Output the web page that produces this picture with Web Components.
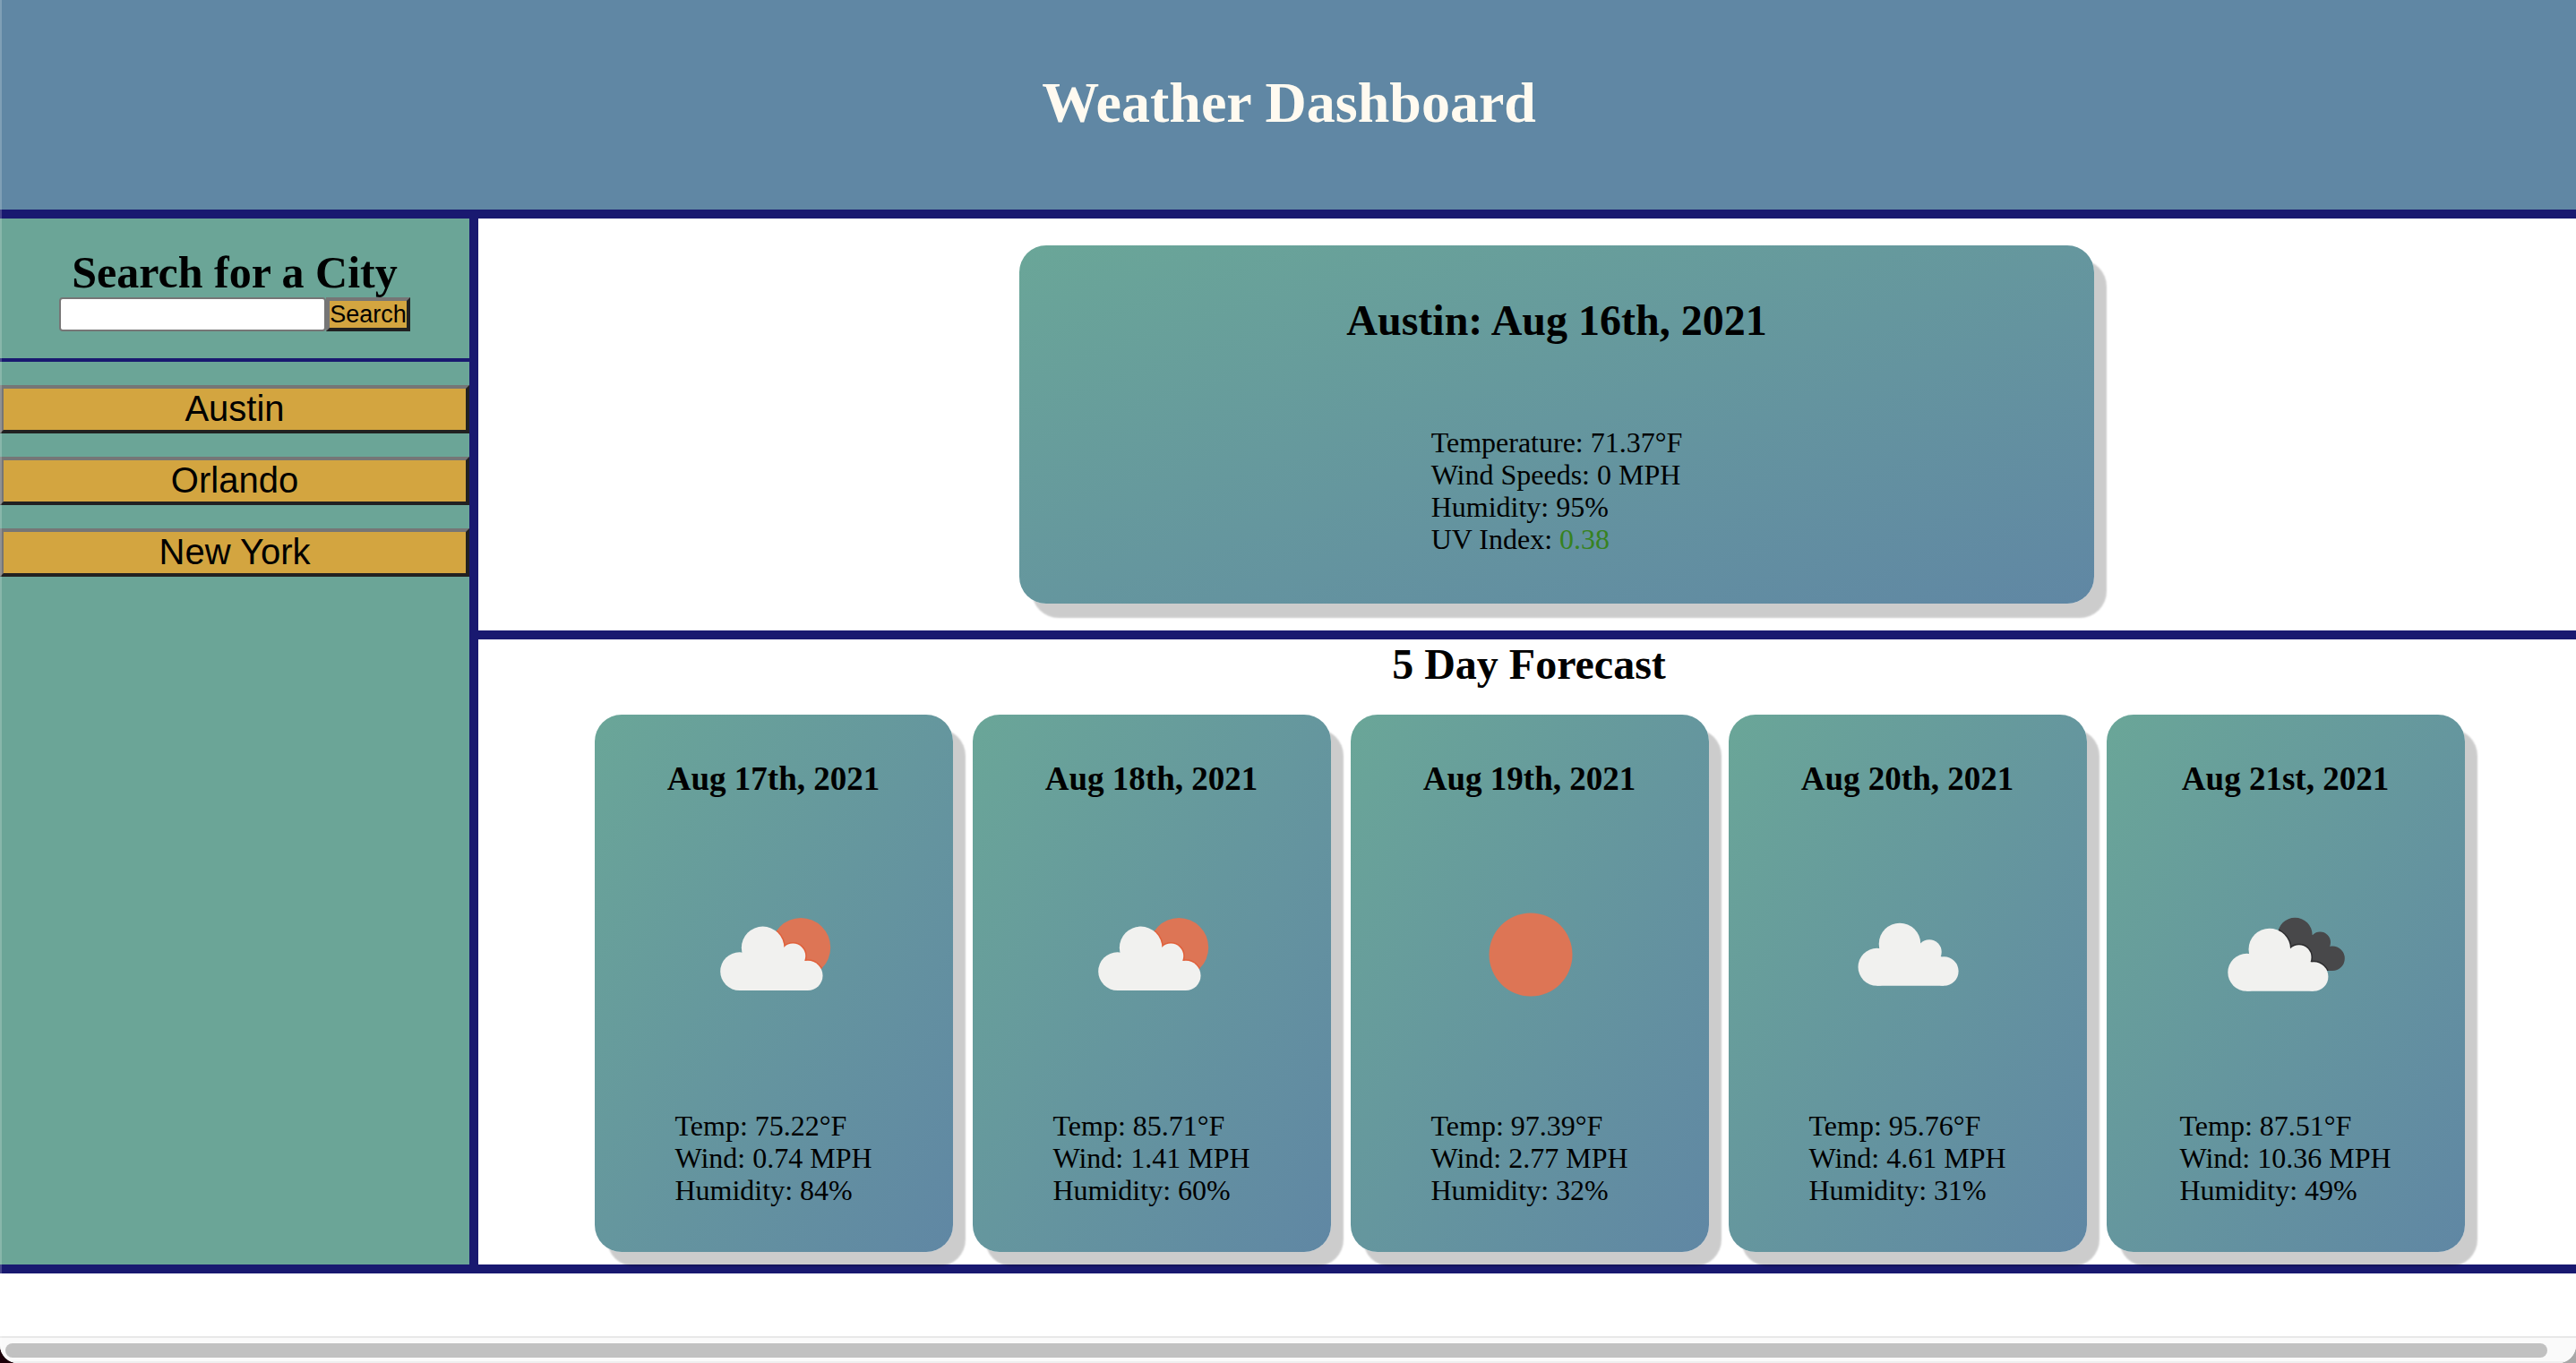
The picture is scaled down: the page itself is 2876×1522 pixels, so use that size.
<!DOCTYPE html>
<html lang="en">
<head>
<meta charset="utf-8">
<title>Weather Dashboard</title>
<style>
  body { margin: 0; font-family: "Liberation Serif", "Times New Roman", serif; font-size: 32px; line-height: 36px; color: #000; background: linear-gradient(90deg, #1c0009 50%, #a8a8a8 50%); }
</style>
</head>
<body>
<weather-app></weather-app>
<script>
const define = (name, html, setup) => customElements.define(name, class extends HTMLElement {
  constructor() {
    super();
    this.attachShadow({ mode: "open" }).innerHTML = html;
  }
  connectedCallback() { if (setup) setup(this, this.shadowRoot); }
});

const sky = "linear-gradient(to bottom right, #6aa698, #6087a4)";
const shadow = "14px 16px 2px rgba(0, 0, 0, 0.2)";

const cloud = `
  <circle cx="91" cy="88" r="23.3"/><circle cx="65.5" cy="113.8" r="21"/>
  <circle cx="124" cy="97" r="13.7"/><circle cx="140.3" cy="118.5" r="16.3"/>
  <path d="M67 95H125L140 104V134.8H65.5V95Z"/>`;
const icons = {
  "few": `
    <clipPath id="sun"><circle cx="130.2" cy="92" r="33"/></clipPath>
    <circle cx="130.2" cy="92" r="33" fill="#dd7555"/>
    <g clip-path="url(#sun)"><g transform="translate(-5.2 2.6) scale(1.02)" fill="none" stroke="#e0603a" stroke-width="3">${cloud}</g></g>
    <g transform="translate(-5.2 2.6) scale(1.02)" fill="#f1f1ef">${cloud}</g>`,
  "clear": `<circle cx="101" cy="100" r="46.5" fill="#dd7555"/>`,
  "cloud": `<g fill="#f1f1ef">${cloud}</g>`,
  "broken": `
    <clipPath id="dark"><circle cx="110.3" cy="78" r="19.3"/><circle cx="138.3" cy="86.3" r="11.7"/>
    <circle cx="152" cy="104.3" r="13.8"/><path d="M110 78H138L152 104V118H110Z"/></clipPath>
    <g clip-path="url(#dark)"><rect width="200" height="200" fill="#48484a"/>
    <g transform="translate(-9.2 6)" fill="none" stroke="#2c2c2e" stroke-width="3">${cloud}</g></g>
    <g transform="translate(-9.2 6)" fill="#f1f1ef">${cloud}</g>`
};

define("weather-icon", `
  <style>
    :host { display: block; width: 200px; height: 200px; }
    svg { display: block; width: 100%; height: 100%; }
  </style>
  <svg viewBox="0 0 200 200" aria-hidden="true"></svg>`,
  (el, root) => { root.querySelector("svg").innerHTML = icons[el.getAttribute("kind")]; });

define("city-button", `
  <style>
    :host { display: block; }
    button { display: block; width: 100%; height: 54px; margin: 0; padding: 0 0 2px; box-sizing: border-box;
      font: 40px/44px "Liberation Sans", Arial, sans-serif; color: #000; background: #d3a540;
      border: 4px solid; border-color: #767676 #212121 #212121 #767676; border-radius: 0; }
  </style>
  <button type="button"><slot></slot></button>`);

define("city-search", `
  <style>
    :host { display: block; padding: 32px 0 30px; border-bottom: 4px solid #191970; }
    form { display: flex; flex-wrap: wrap; justify-content: center; }
    label { flex: 0 0 100%; text-align: center; font-size: 50px; line-height: 56px; font-weight: bold; }
    input, button { height: 38px; margin: 0; box-sizing: border-box; font: 27px/30px "Liberation Sans", Arial, sans-serif; color: #000; }
    input { width: 298px; padding: 2px 4px; background: #fff; border: 2px solid #767676; border-radius: 4px; }
    button { padding: 0; width: 94px; background: #d3a540; border: 4px solid; border-color: #767676 #212121 #212121 #767676; border-radius: 0; }
  </style>
  <form onsubmit="return false">
    <label for="city">Search for a City</label>
    <input id="city" type="text"><button type="submit">Search</button>
  </form>`);

define("current-weather", `
  <style>
    :host { display: flex; flex-direction: column; align-items: center; justify-content: space-between;
      box-sizing: border-box; width: 1200px; height: 400px; padding: 56px 0 54px;
      border-radius: 30px; background: ${sky}; box-shadow: ${shadow}; }
    h2 { margin: 0; font-size: 48px; line-height: 56px; }
  </style>
  <h2><slot name="title"></slot></h2>
  <div><slot></slot></div>`);

define("day-card", `
  <style>
    :host { display: flex; flex-direction: column; align-items: center; justify-content: space-between;
      box-sizing: border-box; width: 400px; height: 600px; padding: 50px 0 51px;
      border-radius: 30px; background: ${sky}; box-shadow: ${shadow}; }
    h3 { margin: 0; font-size: 37px; line-height: 44px; }
  </style>
  <h3><slot name="date"></slot></h3>
  <slot name="icon"></slot>
  <div><slot></slot></div>`);

define("scroll-track", `
  <style>
    :host { display: block; padding: 6px 32px 4px 6px; background: #fafafa; border-top: 2px solid #e8e8e8; border-bottom: 2px solid #efefef; }
    div { height: 16px; border-radius: 8px; background: #c1c1c1; }
  </style>
  <div></div>`);

const days = [
  ["Aug 17th, 2021", "few", "75.22", "0.74", "84"],
  ["Aug 18th, 2021", "few", "85.71", "1.41", "60"],
  ["Aug 19th, 2021", "clear", "97.39", "2.77", "32"],
  ["Aug 20th, 2021", "cloud", "95.76", "4.61", "31"],
  ["Aug 21st, 2021", "broken", "87.51", "10.36", "49"]
];

define("weather-app", `
  <style>
    :host { display: flex; flex-direction: column; position: relative; min-height: 100vh; overflow: hidden; background: #fff; border-radius: 0 0 20px 20px; }
    :host::after { content: ""; position: absolute; inset: 0 auto 0 0; width: 2px; background: rgba(255, 255, 255, 0.2); }
    header { padding: 78px 0 82px 2px; background: #6087a4; border-bottom: 10px solid #191970; text-align: center; }
    h1 { margin: 0; font-size: 64px; line-height: 74px; color: #fffaf0; }
    .body { display: flex; border-bottom: 10px solid #191970; }
    aside { flex: 0 0 524px; background: #6ba597; border-right: 10px solid #191970; }
    nav { display: flex; flex-direction: column; gap: 26px; padding-top: 26px; }
    main { flex: 1; min-width: 0; }
    .today { display: flex; justify-content: center; padding: 30px 0 30px 66px; border-bottom: 10px solid #191970; }
    .uv { color: #37821f; }
    .forecast { padding-left: 4px; }
    .forecast h2 { margin: 0 0 28px; font-size: 48px; line-height: 56px; text-align: center; }
    .days { display: flex; justify-content: center; gap: 22px; padding: 0 0 14px 1px; }
    scroll-track { margin-top: auto; }
  </style>
  <header><h1>Weather Dashboard</h1></header>
  <div class="body">
    <aside>
      <city-search></city-search>
      <nav>
        <city-button>Austin</city-button>
        <city-button>Orlando</city-button>
        <city-button>New York</city-button>
      </nav>
    </aside>
    <main>
      <section class="today">
        <current-weather>
          <span slot="title">Austin: Aug 16th, 2021</span>
          <div>Temperature: 71.37°F</div>
          <div>Wind Speeds: 0 MPH</div>
          <div>Humidity: 95%</div>
          <div>UV Index: <span class="uv">0.38</span></div>
        </current-weather>
      </section>
      <section class="forecast">
        <h2>5 Day Forecast</h2>
        <div class="days">${days.map(([date, kind, temp, wind, hum]) => `
          <day-card>
            <span slot="date">${date}</span>
            <weather-icon slot="icon" kind="${kind}"></weather-icon>
            <div>Temp: ${temp}°F</div>
            <div>Wind: ${wind} MPH</div>
            <div>Humidity: ${hum}%</div>
          </day-card>`).join("")}
        </div>
      </section>
    </main>
  </div>
  <scroll-track></scroll-track>`);
</script>
</body>
</html>
